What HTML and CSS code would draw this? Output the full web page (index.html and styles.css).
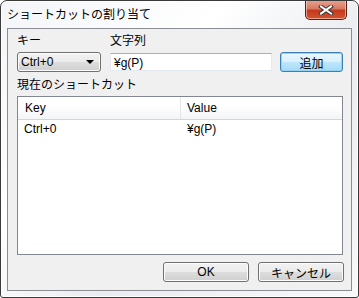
FILE: index.html
```html
<!DOCTYPE html>
<html lang="ja">
<head>
  <meta charset="UTF-8">
  <title>ショートカットの割り当て</title>
  <link rel="stylesheet" href="styles.css">
</head>
<body>

  <div class="window">
    <!-- Title bar -->
    <div class="titlebar">
      <span class="title">ショートカットの割り当て</span>
      <button class="close" aria-label="閉じる">
        <svg width="16" height="10" viewBox="0 0 16 10">
          <path d="M3 1.5 L13 8.5 M13 1.5 L3 8.5" stroke="#3b3b3b" stroke-width="4" stroke-linecap="square"/>
          <path d="M3 1.5 L13 8.5 M13 1.5 L3 8.5" stroke="#ffffff" stroke-width="2" stroke-linecap="square"/>
        </svg>
      </button>
    </div>

    <div class="client">
      <div class="field-row">
        <label class="lbl key-col">キー</label>
        <label class="lbl text-col">文字列</label>
      </div>
      <div class="field-row controls">
        <div class="combo key-col">
          <span>Ctrl+0</span>
          <span class="arrow"></span>
        </div>
        <div class="textbox text-col">¥g(P)</div>
        <button class="btn default">追加</button>
      </div>

      <div class="lbl list-title">現在のショートカット</div>
      <div class="listview">
        <div class="lv-row lv-header">
          <div class="col-key">Key</div>
          <div class="col-value">Value</div>
        </div>
        <div class="lv-row">
          <div class="col-key">Ctrl+0</div>
          <div class="col-value">¥g(P)</div>
        </div>
      </div>

      <div class="footer">
        <button class="btn">OK</button>
        <button class="btn">キャンセル</button>
      </div>
    </div>
  </div>

</body>
</html>
```

FILE: styles.css
```css
body {
  margin: 0;
  font-family: "Liberation Sans", "Noto Sans CJK JP", sans-serif;
  font-size: 12px;
  color: #000;
  background: #fff;
}
.window {
  width: 359px;
  height: 298px;
  box-sizing: border-box;
  border: 1px solid #3a3a3a;
  border-radius: 7px 7px 3px 3px;
  background: linear-gradient(135deg, #f3f5f8 0%, #ffffff 35%, #e9ecf0 60%, #f7f8fa 100%);
  box-shadow: inset 0 0 0 1px #ffffff;
  display: flex;
  flex-direction: column;
  overflow: hidden;
}
.titlebar {
  height: 27px;
  display: flex;
  align-items: flex-start;
  justify-content: space-between;
}
.title {
  margin: 6px 0 0 6px;
  line-height: 16px;
  font-size: 12px;
  text-shadow: 0 0 6px #ffffff, 0 0 3px #ffffff;
}
.close {
  margin: -1px 11px 0 0;
  width: 42px;
  height: 20px;
  padding: 0;
  border: 1px solid #5a1e14;
  border-top: none;
  border-radius: 0 0 5px 5px;
  background: linear-gradient(#e8a493 0%, #d77a63 45%, #c4391c 55%, #d0542f 100%);
  box-shadow: inset 0 0 0 1px rgba(255, 220, 210, 0.6);
  display: flex;
  align-items: center;
  justify-content: center;
}
.client {
  margin: 0 6px 6px 6px;
  flex: 1;
  border: 1px solid #8a8d92;
  background: #f0f0f0;
  padding: 0 7px 0 9px;
  display: flex;
  flex-direction: column;
}
.field-row {
  display: flex;
  align-items: center;
}
.lbl {
  line-height: 15px;
  margin-top: 5px;
}
.key-col {
  width: 84px;
  box-sizing: border-box;
  margin-right: 9px;
}
.text-col {
  width: 162px;
  box-sizing: border-box;
  margin-right: 8px;
}
.controls {
  margin-top: 3px;
}
.combo {
  height: 20px;
  border: 1px solid #707070;
  border-radius: 3px;
  background: linear-gradient(#f2f2f2 0%, #ebebeb 50%, #dddddd 51%, #cfcfcf 100%);
  box-shadow: inset 0 0 0 1px #fcfcfc;
  display: flex;
  align-items: center;
  justify-content: space-between;
  padding: 0 6px 0 3px;
}
.arrow {
  width: 0;
  height: 0;
  border-left: 4px solid transparent;
  border-right: 4px solid transparent;
  border-top: 4px solid #000;
}
.textbox {
  height: 18px;
  border: 1px solid #e3e9ef;
  border-top-color: #abadb3;
  background: #fff;
  padding: 0 3px;
  line-height: 18px;
}
.btn {
  font: inherit;
  color: #000;
  height: 20px;
  padding: 0;
  border: 1px solid #707070;
  border-radius: 3px;
  background: linear-gradient(#f2f2f2 0%, #ebebeb 50%, #dddddd 51%, #cfcfcf 100%);
  box-shadow: inset 0 0 0 1px #fcfcfc;
}
.btn.default {
  width: 63px;
  border-color: #3c7fb1;
  background: linear-gradient(#eaf6fd 0%, #d9f0fc 50%, #bee6fd 51%, #a7d9f5 100%);
  box-shadow: inset 0 0 0 1px #8fd3f7;
}
.list-title {
  margin-top: 6px;
}
.listview {
  margin: 3px 1px 0 0;
  height: 157px;
  border: 1px solid #828790;
  background: #fff;
}
.lv-row {
  display: flex;
  height: 17px;
  align-items: center;
}
.lv-header {
  height: 22px;
  background: linear-gradient(#ffffff 0%, #ffffff 40%, #f4f5f7 100%);
  border-bottom: 1px solid #d5d5d5;
}
.col-key {
  width: 163px;
  box-sizing: border-box;
  padding-left: 6px;
}
.lv-header .col-key {
  padding-left: 7px;
  border-right: 1px solid #e3e5e8;
  height: 100%;
  display: flex;
  align-items: center;
}
.col-value {
  padding-left: 6px;
}
.footer {
  display: flex;
  justify-content: flex-end;
  gap: 9px;
  margin-top: 7px;
}
.footer .btn {
  width: 86px;
}
```
